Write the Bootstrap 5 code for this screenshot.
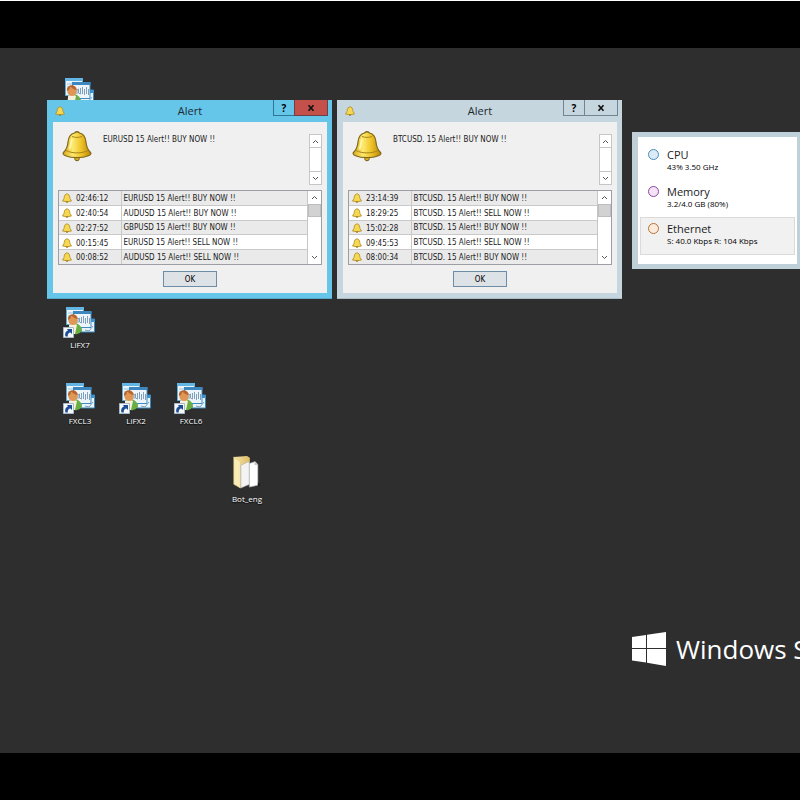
<!DOCTYPE html>
<html lang="en">
<head>
<meta charset="utf-8">
<meta name="viewport" content="width=device-width, initial-scale=1">
<title>Desktop</title>
<link href="https://cdn.jsdelivr.net/npm/bootstrap@5.3.0/dist/css/bootstrap.min.css" rel="stylesheet">
<style>
  body { font-family: "Open Sans", "Noto Sans", sans-serif; }
  .screen { border-top: 1px solid #fff; }
  .bar { height: 47px; }
  .desktop { background: #2e2e2e; }

  /* things placed freely on the desktop */
  .spot { position: absolute; }
  .at-hidden { left: 58px; top: 28px; }
  .at-lifx7 { left: 52px; top: 257px; }
  .at-fxcl3 { left: 52px; top: 333px; }
  .at-lifx2 { left: 108px; top: 333px; }
  .at-fxcl6 { left: 163px; top: 333px; }
  .at-bot { left: 219px; top: 407px; }
  .at-win1 { left: 47px; top: 52px; }
  .at-win2 { left: 337px; top: 52px; }
  .at-stats { left: 632px; right: -3px; top: 84px; }
  .at-brand { left: 632px; top: 582px; }

  .shortcut { width: 56px; background: none; border: 0; padding: 0; color: #fff; font-size: 8px; line-height: 12px; text-shadow: 0 1px 1px #000; }
  .shortcut svg { width: 34px; height: 34px; }

  .win { width: 285px; padding: 0 5px 5px 6px; background: #66c6ea; border-bottom: 1px solid #55aacb; }
  .win.idle { background: #c5d6de; border-color: #a9bcc5; }
  .titlebar { height: 22px; font-size: 11px; line-height: 22px; color: #1c2a33; }
  .title-bell { width: 10px; height: 10px; left: 2px; top: 6px; }
  .caption-btns { right: -1px; top: 0; }
  .cap { height: 16px; width: 22px; padding: 0; border: 1px solid #2f7597; border-top: 0; background: #66c6ea; font-size: 10px; line-height: 14px; font-weight: 700; color: #000; }
  .cap + .cap { width: 34px; margin-left: -1px; background: #c4504b; border-color: #6d3f48; }
  .idle .cap, .idle .cap + .cap { background: #c5d6de; border-color: #71848f; }
  .cap svg { width: 8px; height: 8px; display: block; margin: 0 auto; }
  .client { background: #f0f0f0; padding: 0 5px 6px; }
  .msg { height: 68px; padding: 8px 0 0 3px; }
  .msg > svg { width: 32px; height: 32px; }
  .alert-font { font-family: "DejaVu Sans Condensed", "DejaVu Sans", sans-serif; font-stretch: condensed; font-size: 8px; line-height: 10px; color: #1a1a1a; }
  .msg-text { margin: 5px 0 0 10px; }
  .track { width: 13px; background: #fff; border: 1px solid #c6c6c6; }
  .msg .track { height: 51px; margin-top: 4px; }
  .step { height: 13px; padding: 0; border: 0; background: #fff; line-height: 0; }
  .step svg { width: 7px; height: 5px; }
  .msg .step:first-child { border-bottom: 1px solid #c6c6c6; }
  .msg .step:last-child { border-top: 1px solid #c6c6c6; }
  .thumb { height: 13px; background: #d2d2d2; border: 1px solid #bdbdbd; }
  .log { height: 75px; border: 1px solid #9c9ea3; }
  .log .track { border-width: 0 0 0 1px; width: 14px; }
  .log table { height: 73px; border-collapse: collapse; }
  .log td { padding: 2px 0 0 2px; border-bottom: 1px solid #c9c9c9; background: #fff; white-space: nowrap; vertical-align: middle; }
  .log tr:nth-child(odd) td { background: #eaeaea; }
  .log tr:last-child td { border-bottom: 0; }
  .log td:first-child { width: 62px; padding: 1px 0 0 3px; border-right: 1px solid #c9c9c9; }
  .log td svg { width: 10px; height: 10px; margin-right: 4px; }
  .ok { width: 54px; height: 16px; margin-top: 6px; padding: 1px 0 0; border: 1px solid #6c8ca8; background: #dde2e6; line-height: 12px; }

  .stats { background: #bfd0d9; padding: 5px 6px; }
  .stats .pane { background: #fff; padding: 6px 2px 9px; }
  .stat { border: 1px solid transparent; background: none; height: 37px; padding: 3px 7px; color: #1a1a1a; }
  .stat.active-stat { background: #f1f1f1; border-color: #dadada; height: 38px; }
  .stat-name { font-size: 11px; line-height: 15px; }
  .stat-val { font-size: 8px; line-height: 10px; color: #000; }
  .dot { width: 11px; height: 11px; border-radius: 50%; border: 1px solid #4a8dbb; background: #dcecf6; margin-top: 2px; margin-right: 8px; }
  .dot.mem { border-color: #8b4a9c; background: #f5e2f8; }
  .dot.eth { border-color: #b5733a; background: #fcebda; }

  .brand { gap: 10px; font-size: 26px; line-height: 38px; color: #fff; white-space: nowrap; }
  .brand svg { width: 34px; height: 36px; }
</style>
<script src="https://cdn.jsdelivr.net/npm/bootstrap@5.3.0/dist/js/bootstrap.bundle.min.js"></script>
</head>
<body class="bg-black">
<svg class="position-absolute" width="0" height="0" aria-hidden="true">
  <defs>
    <linearGradient id="gold" x1="0" x2="1"><stop offset="0" stop-color="#dba818"/><stop offset=".35" stop-color="#fdea70"/><stop offset=".65" stop-color="#efc428"/><stop offset="1" stop-color="#b98508"/></linearGradient>
    <linearGradient id="fold" x1="0" x2="1"><stop offset="0" stop-color="#f8e7a4"/><stop offset="1" stop-color="#dcbc6a"/></linearGradient>
  </defs>
  <symbol id="bell" viewBox="0 0 30 32">
    <circle cx="15" cy="28.500" r="2.300" fill="#e0b020" stroke="#75601c"/>
    <path d="M12.500 3Q15 .5 17.500 3C22 4 23.500 7 24 12c.4 5 1.500 7.500 4.500 10.500 1 1.200 0 2.500-2 3.200-6 2.600-17 2.600-23 0-2-.7-3-2-2-3.200C4.500 19.500 5.600 17 6 12c.5-5 2-8 6.500-9z" fill="url(#gold)" stroke="#80681c" stroke-width="1.200"/>
    <path d="M4 20.500c6 3.200 16 3.200 22 0M10 6.500c3 1.200 7 1.200 10 0" fill="none" stroke="#a9841a"/>
    <path d="M10 9c-1 3-1 7-2.500 10" fill="none" stroke="#fff6a8" stroke-width="2"/>
  </symbol>
  <symbol id="minibell" viewBox="0 0 10 10">
    <path d="M4 1.200Q5 .2 6 1.200C7.800 1.800 7.600 4 8 5.500L9.500 8Q5 9.500.5 8L2 5.500C2.400 4 2.200 1.800 4 1.200z" fill="#f6d850" stroke="#b08a28" stroke-width=".8"/>
    <circle cx="5" cy="9" r=".9" fill="#a57c1c"/>
  </symbol>
  <symbol id="up" viewBox="0 0 7 5"><path d="M1 4l2.500-2.500L6 4" fill="none" stroke="#555"/></symbol>
  <symbol id="down" viewBox="0 0 7 5"><path d="M1 1l2.500 2.500L6 1" fill="none" stroke="#555"/></symbol>
  <symbol id="close" viewBox="0 0 8 8"><path d="M1.500 1.200l5 5.600M6.500 1.200l-5 5.600" stroke="#111" stroke-width="1.700"/></symbol>
  <symbol id="charts" viewBox="0 0 34 34">
    <path d="M18 14h13.500v13H18z" fill="#e9f3fa" stroke="#3886ba"/><path d="M18 14h14v3H18z" fill="#3f92c9"/>
    <path d="M3.500 2.500h17v17h-17z" fill="#e9f4fb" stroke="#65abd4"/><path d="M3 2h18v3H3z" fill="#63b5e3"/>
    <path d="M5 8h14M5 11h14" stroke="#9ac5df"/>
    <path d="M10.500 6.500h17.500v16H10.500z" fill="#edf5fb" stroke="#3f8dc0"/><path d="M10 6h18.500v3H10z" fill="#3c87bf"/>
    <path d="M15 18v-4l1.500-1v4l2 1v-6M20.500 11v7M22.500 13v6M24.500 11v7M26.500 13v6M22 25l4 1 4-5" fill="none" stroke="#7f9fbb"/>
    <path d="M5 29c0-8 2-11 6-11s8 3 8 8q-3 4-7 3z" fill="#69ae45"/><path d="M6 20l4-2 4 2-2 9H6z" fill="#f5f1dd"/>
    <circle cx="10" cy="15.500" r="4.600" fill="#e09654"/><path d="M5 15c-1-7 9-8 10-1-4 0-5-3-7-3 0 2-1 3-3 4z" fill="#b8652c"/>
  </symbol>
  <symbol id="shortcut" viewBox="0 0 34 34">
    <use href="#charts" width="34" height="34"/>
    <path d="M.5 22.500h10v10H.5z" fill="#f5f8fb" stroke="#a9b9c8"/>
    <path d="M2.500 31.500c-1-3 .5-5.500 2.500-6L4 24h5v5l-1.500-1.500c-2 .2-3 1.500-2.700 4z" fill="#1d4d94"/>
  </symbol>
  <symbol id="folder" viewBox="0 0 34 36">
    <path d="M3 2l14-1 3 2v28L9 35z" fill="url(#fold)"/>
    <path d="M3 2l7 5v28l-7-4z" fill="#f8ebb6" stroke="#dcc680" stroke-width=".6"/>
    <path d="M10.500 11l8-4 1 2v22l-9 4z" fill="#f3f3f3" stroke="#aaa" stroke-width=".6"/>
    <path d="M19.500 9l6-2 3 3v22l-9 2z" fill="#fff" stroke="#aaa" stroke-width=".6"/>
    <path d="M25 7v3.500h3.500z" fill="#c5c5c5"/><path d="M28.500 29l3 3-3 1z" fill="#1b1b1b"/>
  </symbol>
</svg>

<div class="screen d-flex flex-column vh-100 overflow-hidden">
  <div class="bar flex-shrink-0"></div>
  <main class="desktop flex-grow-1 position-relative overflow-hidden">
    <button type="button" class="shortcut spot at-lifx7 d-flex flex-column align-items-center"><svg aria-hidden="true"><use href="#shortcut"/></svg>LiFX7</button>
    <button type="button" class="shortcut spot at-fxcl3 d-flex flex-column align-items-center"><svg aria-hidden="true"><use href="#shortcut"/></svg>FXCL3</button>
    <button type="button" class="shortcut spot at-lifx2 d-flex flex-column align-items-center"><svg aria-hidden="true"><use href="#shortcut"/></svg>LiFX2</button>
    <button type="button" class="shortcut spot at-fxcl6 d-flex flex-column align-items-center"><svg aria-hidden="true"><use href="#shortcut"/></svg>FXCL6</button>
    <button type="button" class="shortcut spot at-bot d-flex flex-column align-items-center"><svg aria-hidden="true"><use href="#folder"/></svg><span class="pt-1">Bot_eng</span></button>
    <button type="button" class="shortcut spot at-hidden text-start" aria-label="Shortcut"><svg class="ms-1" aria-hidden="true"><use href="#charts"/></svg></button>

    <section class="win spot at-win1">
      <header class="titlebar position-relative text-center">
        <svg class="title-bell position-absolute" aria-hidden="true"><use href="#minibell"/></svg>
        Alert
        <div class="caption-btns position-absolute d-flex">
          <button type="button" class="cap">?</button><button type="button" class="cap" aria-label="Close"><svg><use href="#close"/></svg></button>
        </div>
      </header>
      <div class="client alert-font">
        <div class="msg d-flex align-items-start">
          <svg aria-hidden="true"><use href="#bell"/></svg>
          <p class="msg-text flex-grow-1">EURUSD 15 Alert!! BUY NOW !!</p>
          <div class="track d-flex flex-column justify-content-between">
            <button type="button" class="step" aria-label="Up"><svg><use href="#up"/></svg></button>
            <button type="button" class="step" aria-label="Down"><svg><use href="#down"/></svg></button>
          </div>
        </div>
        <div class="log d-flex">
          <table class="flex-grow-1">
            <tbody>
              <tr><td><svg><use href="#minibell"/></svg>02:46:12</td><td>EURUSD 15 Alert!! BUY NOW !!</td></tr>
              <tr><td><svg><use href="#minibell"/></svg>02:40:54</td><td>AUDUSD 15 Alert!! BUY NOW !!</td></tr>
              <tr><td><svg><use href="#minibell"/></svg>02:27:52</td><td>GBPUSD 15 Alert!! BUY NOW !!</td></tr>
              <tr><td><svg><use href="#minibell"/></svg>00:15:45</td><td>EURUSD 15 Alert!! SELL NOW !!</td></tr>
              <tr><td><svg><use href="#minibell"/></svg>00:08:52</td><td>AUDUSD 15 Alert!! SELL NOW !!</td></tr>
            </tbody>
          </table>
          <div class="track d-flex flex-column">
            <button type="button" class="step" aria-label="Up"><svg><use href="#up"/></svg></button>
            <div class="thumb"></div>
            <button type="button" class="step mt-auto" aria-label="Down"><svg><use href="#down"/></svg></button>
          </div>
        </div>
        <div class="text-center"><button type="button" class="ok">OK</button></div>
      </div>
    </section>

    <section class="win idle spot at-win2">
      <header class="titlebar position-relative text-center">
        <svg class="title-bell position-absolute" aria-hidden="true"><use href="#minibell"/></svg>
        Alert
        <div class="caption-btns position-absolute d-flex">
          <button type="button" class="cap">?</button><button type="button" class="cap" aria-label="Close"><svg><use href="#close"/></svg></button>
        </div>
      </header>
      <div class="client alert-font">
        <div class="msg d-flex align-items-start">
          <svg aria-hidden="true"><use href="#bell"/></svg>
          <p class="msg-text flex-grow-1">BTCUSD. 15 Alert!! BUY NOW !!</p>
          <div class="track d-flex flex-column justify-content-between">
            <button type="button" class="step" aria-label="Up"><svg><use href="#up"/></svg></button>
            <button type="button" class="step" aria-label="Down"><svg><use href="#down"/></svg></button>
          </div>
        </div>
        <div class="log d-flex">
          <table class="flex-grow-1">
            <tbody>
              <tr><td><svg><use href="#minibell"/></svg>23:14:39</td><td>BTCUSD. 15 Alert!! BUY NOW !!</td></tr>
              <tr><td><svg><use href="#minibell"/></svg>18:29:25</td><td>BTCUSD. 15 Alert!! SELL NOW !!</td></tr>
              <tr><td><svg><use href="#minibell"/></svg>15:02:28</td><td>BTCUSD. 15 Alert!! BUY NOW !!</td></tr>
              <tr><td><svg><use href="#minibell"/></svg>09:45:53</td><td>BTCUSD. 15 Alert!! SELL NOW !!</td></tr>
              <tr><td><svg><use href="#minibell"/></svg>08:00:34</td><td>BTCUSD. 15 Alert!! BUY NOW !!</td></tr>
            </tbody>
          </table>
          <div class="track d-flex flex-column">
            <button type="button" class="step" aria-label="Up"><svg><use href="#up"/></svg></button>
            <div class="thumb"></div>
            <button type="button" class="step mt-auto" aria-label="Down"><svg><use href="#down"/></svg></button>
          </div>
        </div>
        <div class="text-center"><button type="button" class="ok">OK</button></div>
      </div>
    </section>

    <section class="stats spot at-stats">
      <div class="pane d-flex flex-column">
        <button type="button" class="stat d-flex text-start"><span class="dot"></span><span><span class="stat-name d-block">CPU</span><span class="stat-val d-block">43% 3.50 GHz</span></span></button>
        <button type="button" class="stat d-flex text-start"><span class="dot mem"></span><span><span class="stat-name d-block">Memory</span><span class="stat-val d-block">3.2/4.0 GB (80%)</span></span></button>
        <button type="button" class="stat active-stat d-flex text-start"><span class="dot eth"></span><span><span class="stat-name d-block">Ethernet</span><span class="stat-val d-block">S: 40.0 Kbps R: 104 Kbps</span></span></button>
      </div>
    </section>

    <div class="brand spot at-brand d-flex align-items-center">
      <svg viewBox="0 0 34 36" aria-hidden="true"><path d="M0 6l14-2v13H0zM15 3.800L34 1v16H15zM0 18h14v13.500L0 29.500zM15 18h19v17l-19-3.200z" fill="#fff"/></svg>
      <span>Windows S</span>
    </div>
  </main>
  <div class="bar flex-shrink-0"></div>
</div>
</body>
</html>
